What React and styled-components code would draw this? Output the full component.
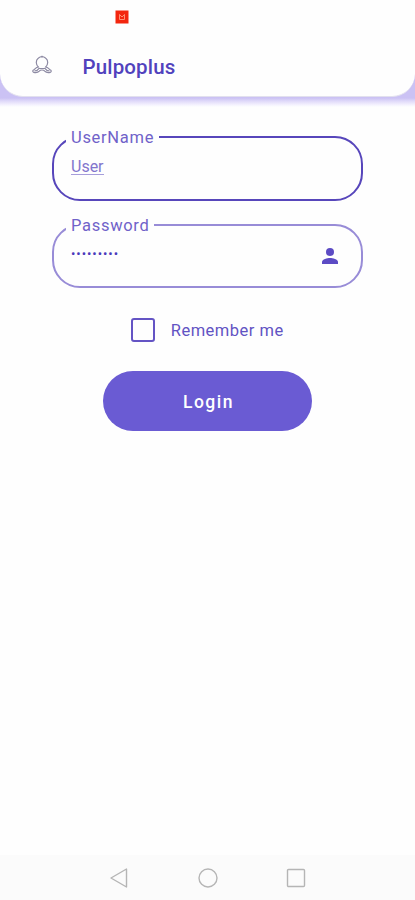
import React, { useState } from "react";
import styled, { createGlobalStyle } from "styled-components";

const GlobalStyle = createGlobalStyle`
  * {
    box-sizing: border-box;
  }

  body {
    margin: 0;
    background: #fefefe;
    font-family: Roboto, "Liberation Sans", sans-serif;
  }
`;

const Screen = styled.div`
  display: flex;
  flex-direction: column;
  height: 900px;
  overflow: hidden;
  background: #fefefe;
`;

const HeaderShade = styled.div`
  height: 107px;
  background: linear-gradient(#cbc2f4 98px, #dfd9f9 101px, #f5f3fe 105px, #fefefe 107px);
`;

const Header = styled.header`
  height: 97px;
  border-bottom: 1px solid #e2e0ee;
  border-radius: 0 0 23px 23px;
  background: #fefefe;
`;

const StatusBar = styled.div`
  height: 34px;
  padding: 10px 0 0 115px;

  svg {
    display: block;
  }
`;

const TitleBar = styled.div`
  display: flex;
  align-items: center;
  height: 62px;
  padding: 3px 0 0 31px;

  svg {
    margin-top: -4px;
  }
`;

const Title = styled.h1`
  margin: 0 0 0 29.5px;
  color: #5142bd;
  font-size: 20.5px;
  font-weight: 500;
  letter-spacing: 0.15px;
`;

const Form = styled.form`
  display: flex;
  flex: 1;
  flex-direction: column;
  align-items: center;
  padding-top: 19px;
`;

const Field = styled.fieldset`
  display: flex;
  align-items: flex-start;
  width: 311px;
  height: ${props => props.$height}px;
  margin: 0 0 ${props => props.$gap}px;
  padding: 9px 19px 0 17px;
  border: 2px solid ${props => props.$color};
  border-radius: 28px;
`;

const Legend = styled.legend`
  height: 22px;
  margin-left: -5px;
  padding: 0 5px;
  color: #7062c9;
  font-size: 16.5px;
  line-height: 23px;
  letter-spacing: ${props => props.$spacing}px;
`;

const Value = styled.div`
  flex: 1;
  color: #8275cd;
  font-size: 16px;
  line-height: 20px;

  span {
    display: inline-block;
    height: 18px;
    border-bottom: 1px solid #a69dda;
  }
`;

const Dots = styled.div`
  flex: 1;
  padding-top: 1px;
  color: #4a39bb;
  font-size: 13px;
  line-height: 15px;
  letter-spacing: 0.95px;
`;

const Remember = styled.label`
  display: flex;
  align-items: center;
  gap: 15.5px;
  height: 24px;
  margin: 30px 0 29px;
  color: #6253c3;
  font-size: 16.5px;
  letter-spacing: 0.5px;
`;

const Checkbox = styled.input`
  appearance: none;
  width: 24px;
  height: 24px;
  margin: 0;
  border: 2px solid #6454c4;
  border-radius: 3px;

  &:checked {
    background: #6a5bd2;
  }
`;

const LoginButton = styled.button`
  width: 209px;
  height: 60px;
  padding: 2px 0 0 2px;
  border: 0;
  border-radius: 30px;
  background: #6a5bd3;
  color: #fff;
  font-family: inherit;
  font-size: 17.5px;
  font-weight: 500;
  letter-spacing: 1.5px;
`;

const NavBar = styled.nav`
  height: 45px;
  display: flex;
  align-items: center;
  justify-content: center;
  gap: 66px;
  background: #fbfbfb;
`;

const NavIcon = styled.svg`
  width: 22px;
  height: 22px;
  fill: none;
  stroke: #b5b5b5;
  stroke-width: 1.4;
  stroke-linejoin: round;
`;

function Octopus() {
  return (
    <svg width="22" height="20" viewBox="0 0 22 20" fill="none" stroke="#8d8aa3" strokeWidth="1.2">
      <path d="M7.500 12.200C4.600 9.900 4.600 5.200 7.200 3.200C9.400 1.400 12.600 1.400 14.800 3.200C17.400 5.200 17.400 9.900 14.500 12.200" />
      <path d="M11 0.800V2.500" />
      <path d="M7.500 12.200C5.500 11.700 4.600 13.500 3.300 14.500C1.500 15 1.200 17 2.700 17.300C4.600 17.700 7 17.500 8.300 16.200C9.400 14.600 12.600 14.600 13.700 16.200C15 17.500 17.400 17.700 19.300 17.300C20.800 17 20.500 15 18.700 14.500C17.400 13.500 16.500 11.700 14.500 12.200" />
      <path d="M3.500 15.800C5.500 16 7.200 14.700 8.500 12.800M18.500 15.800C16.500 16 14.800 14.700 13.500 12.800M8.500 13.500H13.500" />
    </svg>
  );
}

function App() {
  const [remember, setRemember] = useState(false);

  return (
    <Screen>
      <GlobalStyle />
      <HeaderShade>
        <Header>
          <StatusBar>
            <svg width="14" height="14" viewBox="0 0 14 14">
              <rect x="0.500" y="0.500" width="13" height="13" fill="#f3260e" />
              <path d="M4.500 4.500v5h5v-5M4.500 4.500L7 7L9.500 4.500" fill="none" stroke="#ff9a80" strokeWidth="0.900" />
            </svg>
          </StatusBar>
          <TitleBar>
            <Octopus />
            <Title>Pulpoplus</Title>
          </TitleBar>
        </Header>
      </HeaderShade>
      <Form onSubmit={e => e.preventDefault()}>
        <Field $color="#5746bb" $height={75} $gap={13}>
          <Legend $spacing={0.7}>UserName</Legend>
          <Value>
            <span>User</span>
          </Value>
        </Field>
        <Field $color="#988cd7" $height={74} $gap={0}>
          <Legend $spacing={0.7}>Password</Legend>
          <Dots>•••••••••</Dots>
          <svg width="24" height="24" viewBox="0 0 24 24" fill="#5c4bc4">
            <circle cx="12" cy="7" r="4" />
            <path d="M4 19v-2c0-2.700 5.300-4 8-4s8 1.300 8 4v2z" />
          </svg>
        </Field>
        <Remember>
          <Checkbox
            type="checkbox"
            checked={remember}
            onChange={e => setRemember(e.target.checked)}
          />
          Remember me
        </Remember>
        <LoginButton type="submit">Login</LoginButton>
      </Form>
      <NavBar>
        <NavIcon viewBox="0 0 22 22">
          <path d="M2 11L17.500 2V20z" />
        </NavIcon>
        <NavIcon viewBox="0 0 22 22">
          <circle cx="11" cy="11" r="9" />
        </NavIcon>
        <NavIcon viewBox="0 0 22 22">
          <rect x="2.500" y="2.500" width="17" height="17" rx="1" />
        </NavIcon>
      </NavBar>
    </Screen>
  );
}

export default App;
